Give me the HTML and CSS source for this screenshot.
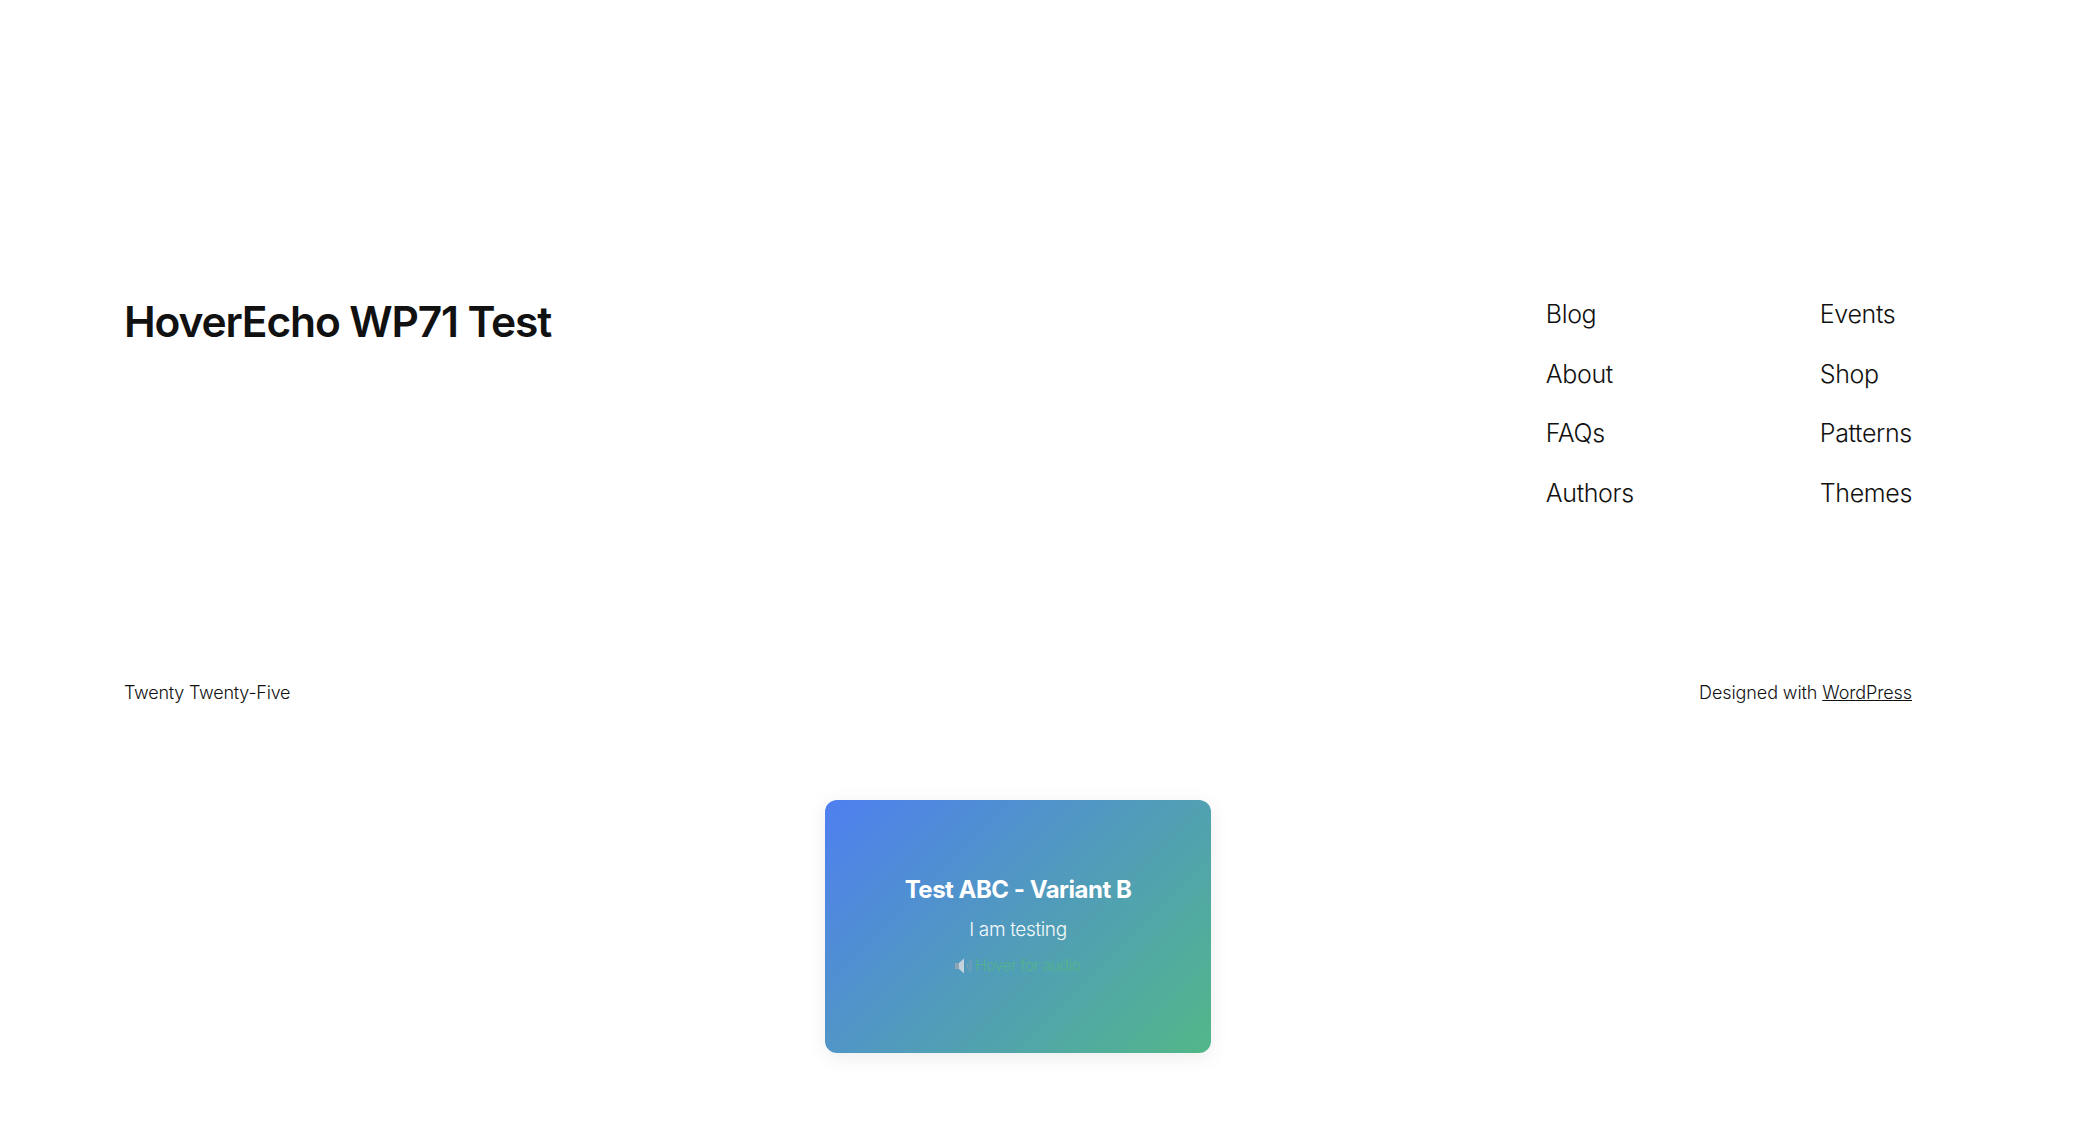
FILE: index.html
```html
<!DOCTYPE html>
<html lang="en">
  <head>
    <meta charset="UTF-8" />
    <meta name="viewport" content="width=device-width, initial-scale=1.0" />
    <title>HoverEcho WP71 Test</title>
    <link rel="stylesheet" href="styles.css">
  </head>
  <body>
    <div class="page">
      <footer class="site-footer">
        <div class="footer-top">
          <h1 class="site-title">HoverEcho WP71 Test</h1>
          <nav class="footer-nav">
            <ul class="nav-col">
              <li><a href="#">Blog</a></li>
              <li><a href="#">About</a></li>
              <li><a href="#">FAQs</a></li>
              <li><a href="#">Authors</a></li>
            </ul>
            <ul class="nav-col">
              <li><a href="#">Events</a></li>
              <li><a href="#">Shop</a></li>
              <li><a href="#">Patterns</a></li>
              <li><a href="#">Themes</a></li>
            </ul>
          </nav>
        </div>
        <div class="footer-bottom">
          <p>Twenty Twenty-Five</p>
          <p class="footer-credit">Designed with <a href="#">WordPress</a></p>
        </div>
      </footer>

      <div class="card-wrap">
        <div class="echo-card">
          <h3 class="card-title">Test ABC - Variant B</h3>
          <p class="card-text">I am testing</p>
          <p class="card-hint">
            <svg class="speaker" viewBox="0 0 17 16" width="17" height="16">
              <rect x="0" y="5" width="4" height="6" fill="#8ea5b5" />
              <path d="M4 5L9 0.5V15.5L4 11z" fill="#c4d2dc" />
              <path d="M11.5 5.5a3.5 3.5 0 0 1 0 5M13 3.5a6 6 0 0 1 0 9M14.5 2a8 8 0 0 1 0 12" fill="none" stroke="#8ea5b5" stroke-width="0.8" />
            </svg>
            <span class="hint-label">Hover for audio</span>
          </p>
        </div>
      </div>
    </div>
  </body>
</html>
```

FILE: styles.css
```css
* {
  margin: 0;
  padding: 0;
  box-sizing: border-box;
}

html {
  overflow: hidden;
}

body {
  font-family: "Inter", "Noto Sans", sans-serif;
  background-color: #fff;
  color: #111;
  height: 100vh;
}

.page {
  width: 2036px;
  padding-top: 297px;
}

.site-footer {
  padding: 0 124px;
}

.footer-top {
  display: flex;
  justify-content: space-between;
  align-items: flex-start;
}

.site-title {
  font-size: 42.5px;
  font-weight: 600;
  letter-spacing: -1.15px;
  line-height: 50px;
}

.footer-nav {
  display: flex;
  gap: 186px;
}

.nav-col {
  list-style: none;
  display: flex;
  flex-direction: column;
  gap: 24.5px;
}

.nav-col li {
  font-size: 25px;
  font-weight: 300;
  line-height: 35px;
  letter-spacing: -0.35px;
}

.nav-col a {
  color: #111;
  text-decoration: none;
}

.footer-bottom {
  display: flex;
  justify-content: space-between;
  margin-top: 168.5px;
  font-size: 18px;
  font-weight: 300;
  line-height: 28px;
  letter-spacing: -0.22px;
}

.footer-credit {
  letter-spacing: -0.1px;
}

.footer-bottom a {
  color: #111;
}

.card-wrap {
  display: flex;
  justify-content: center;
  margin-top: 93px;
}

.echo-card {
  width: 386px;
  height: 253px;
  padding-top: 74px;
  border-radius: 12px;
  background: linear-gradient(135deg, #4f7ff0, #52b788);
  box-shadow: 0 4px 20px rgba(0, 0, 0, 0.08);
  color: #fff;
  text-align: center;
}

.card-title {
  font-size: 24px;
  font-weight: 700;
  line-height: 32px;
  letter-spacing: -0.5px;
}

.card-text {
  margin-top: 11px;
  font-size: 19px;
  font-weight: 300;
  line-height: 26px;
  letter-spacing: -0.35px;
  opacity: 0.95;
}

.card-hint {
  display: flex;
  justify-content: center;
  align-items: center;
  gap: 3px;
  margin-top: 10px;
  font-size: 15.5px;
  font-weight: 300;
  line-height: 26px;
  letter-spacing: -0.4px;
}

.hint-label {
  color: #52b788;
  opacity: 0.9;
}
```
